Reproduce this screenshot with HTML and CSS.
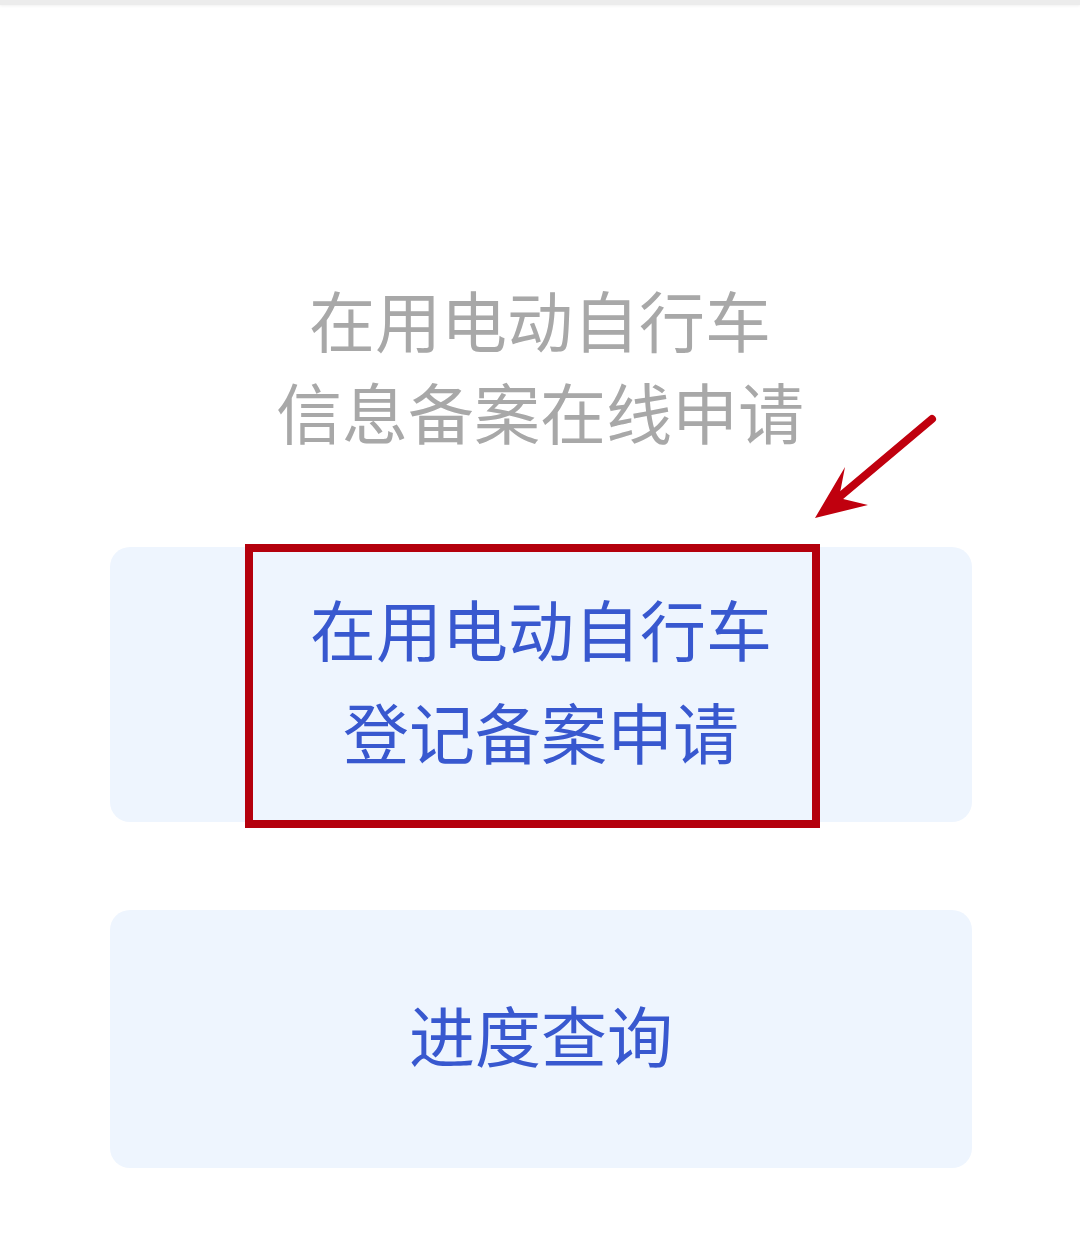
FILE: index.html
```html
<!DOCTYPE html>
<html lang="zh-CN">
<head>
<meta charset="utf-8">
<title>在用电动自行车信息备案在线申请</title>
<link rel="stylesheet" href="styles.css">
</head>
<body>
<div class="topbar"></div>
<main class="page">
  <h1 class="title">在用电动自行车<br>信息备案在线申请</h1>
  <div class="card card-apply">
    <span class="card-text">在用电动自行车<br>登记备案申请</span>
    <div class="highlight"></div>
    <svg class="arrow" width="140" height="120" viewBox="0 0 140 120">
      <path d="M125 13 L30 93" stroke="#c0000e" stroke-width="8" stroke-linecap="round" fill="none"/>
      <path d="M8 112 L38 61 L32 92 L61 99 Z" fill="#c0000e"/>
    </svg>
  </div>
  <div class="card card-query">
    <span class="card-text">进度查询</span>
  </div>
</main>
</body>
</html>
```
FILE: styles.css
```css
html, body {
  margin: 0;
  padding: 0;
  background: #ffffff;
}
body {
  width: 1080px;
  height: 1256px;
  overflow: hidden;
  font-family: "Noto Sans CJK SC", "Noto Sans", sans-serif;
}
.topbar {
  height: 5px;
  background: #ececec;
  box-shadow: 0 1px 3px rgba(0,0,0,0.06);
}
.page {
  display: flex;
  flex-direction: column;
  align-items: center;
  padding-top: 267px;
}
.title {
  margin: 0 0 5px;
  font-size: 66px;
  line-height: 92px;
  font-weight: 400;
  color: #a8a8a8;
  text-align: center;
}
.card {
  position: relative;
  width: 862px;
  margin-left: 2px;
  box-sizing: border-box;
  background: #eef5fe;
  border-radius: 20px;
  display: flex;
  align-items: center;
  justify-content: center;
  text-align: center;
  color: #3858cf;
  font-size: 66px;
}
.card-apply {
  margin-top: 86px;
  height: 275px;
  line-height: 103px;
}
.card-query {
  margin-top: 88px;
  height: 258px;
  line-height: 92px;
}
.card-text {
  display: block;
  margin-top: -12px;
}
.highlight {
  position: absolute;
  left: 135px;
  top: -3px;
  width: 575px;
  height: 284px;
  box-sizing: border-box;
  border: 8px solid #b4000d;
}
.arrow {
  position: absolute;
  left: 697px;
  top: -141px;
}
```
